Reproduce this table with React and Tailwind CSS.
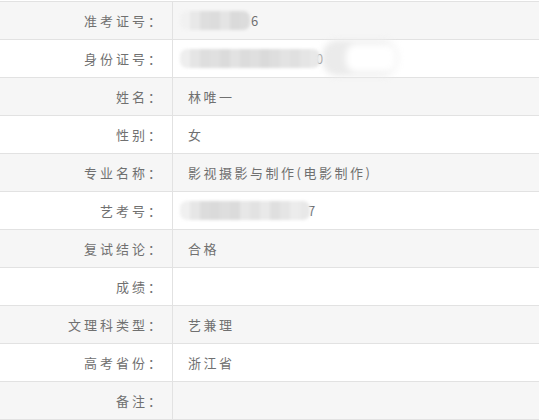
import React from "react";

const rows = [
  { label: "准考证号", value: "mask1" },
  { label: "身份证号", value: "mask2" },
  { label: "姓名", value: "林唯一" },
  { label: "性别", value: "女" },
  { label: "专业名称", value: "影视摄影与制作(电影制作)" },
  { label: "艺考号", value: "mask3" },
  { label: "复试结论", value: "合格" },
  { label: "成绩", value: "" },
  { label: "文理科类型", value: "艺兼理" },
  { label: "高考省份", value: "浙江省" },
  { label: "备注", value: "" },
];

const Mosaic = ({ shades }) => (
  <div className="flex h-[19px] overflow-hidden rounded-[7px] blur-[1.5px]">
    {shades.map((c, i) => (
      <div key={i} className="h-full w-[10px]" style={{ background: c }} />
    ))}
  </div>
);

const MaskedValue = ({ kind }) => {
  if (kind === "mask1") {
    return (
      <div className="-ml-[8px] flex items-center">
        <Mosaic
          shades={["#f1f1f1", "#e8e8e8", "#dedede", "#dcdcdc", "#e4e4e4", "#dadada", "#dcdcdc"]}
        />
        <span className="ml-[1px]">6</span>
      </div>
    );
  }
  if (kind === "mask2") {
    return (
      <div className="relative -ml-[8px] flex items-center">
        <Mosaic
          shades={[
            "#eeeeee", "#e5e5e5", "#dedede", "#e0e0e0", "#dbdbdb", "#e2e2e2", "#dcdcdc",
            "#dfdfdf", "#dadada", "#dedede", "#e3e3e3", "#e0e0e0", "#e5e5e5", "#e8e8e8",
          ]}
        />
        <span className="-ml-[4px]">0</span>
        <div className="absolute left-[142px] top-[-9px] h-[36px] w-[76px] rounded-[16px] bg-[#ebebeb] blur-[3px]">
          <div className="ml-[24px] mt-[4px] h-[28px] w-[50px] rounded-[10px] bg-white" />
        </div>
      </div>
    );
  }
  return (
    <div className="-ml-[8px] flex items-center">
      <Mosaic
        shades={[
          "#f0f0f0", "#e6e6e6", "#dcdcdc", "#dadada", "#dedede", "#dbdbdb", "#e7e7e7",
          "#e2e2e2", "#e9e9e9", "#dfdfdf", "#e5e5e5", "#ececec", "#e8e8e8",
        ]}
      />
      <span className="-ml-[2px]">7</span>
    </div>
  );
};

export default function App() {
  return (
    <div className="h-[420px] w-[539px] overflow-hidden bg-white pt-px font-['Noto_Sans_CJK_SC','Noto_Sans',sans-serif] text-[13px] text-[#707070]">
      <div className="border-t border-[#e2e2e2]">
        {rows.map((row, i) => (
          <div
            key={row.label}
            className={`flex h-[38px] border-b border-[#e2e2e2] ${i % 2 === 0 ? "bg-[#f6f6f6]" : "bg-white"}`}
          >
            <div className="flex w-[173px] shrink-0 items-center justify-end border-r border-[#e2e2e2] pr-[8px] tracking-[3px]">
              {row.label}：
            </div>
            <div className="flex items-center pl-[15px] tracking-[2.5px]">
              {row.value.startsWith("mask") ? <MaskedValue kind={row.value} /> : row.value}
            </div>
          </div>
        ))}
      </div>
    </div>
  );
}
